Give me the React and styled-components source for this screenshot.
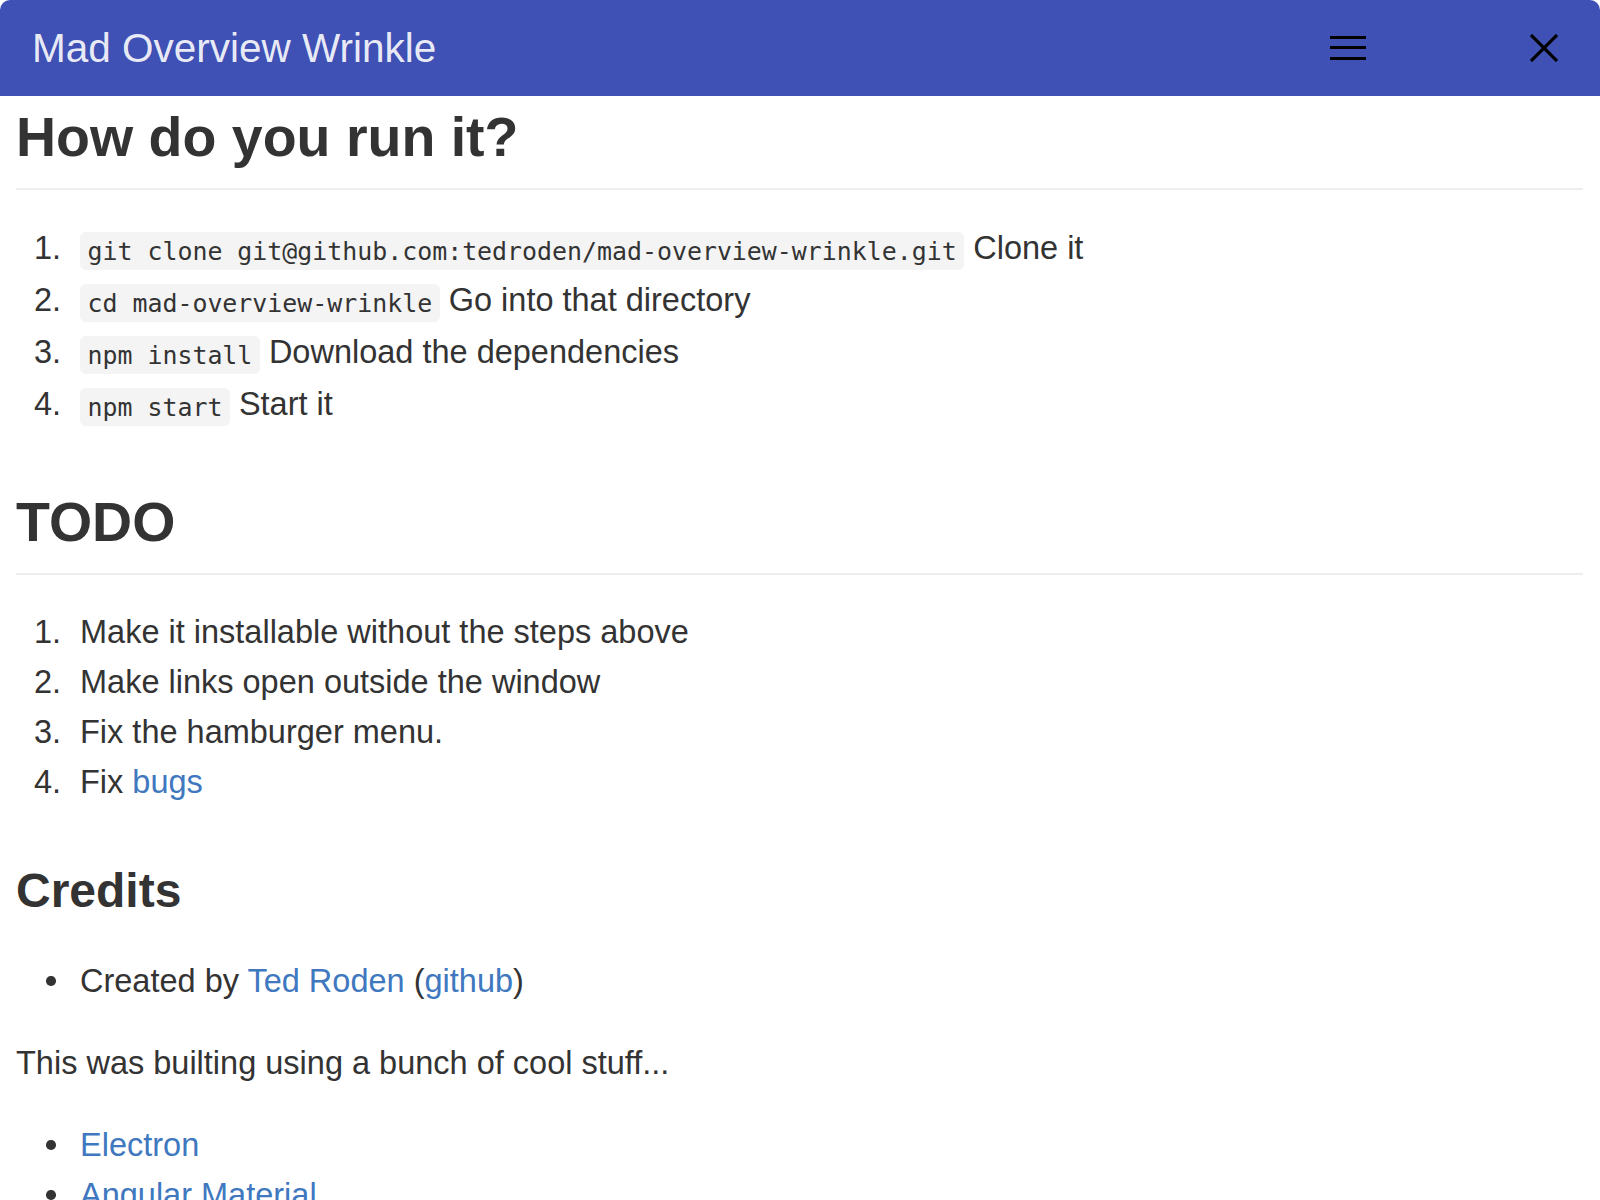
import React from 'react'
import styled, { createGlobalStyle } from 'styled-components'

const runSteps = [
  { code: 'git clone git@github.com:tedroden/mad-overview-wrinkle.git', text: 'Clone it' },
  { code: 'cd mad-overview-wrinkle', text: 'Go into that directory' },
  { code: 'npm install', text: 'Download the dependencies' },
  { code: 'npm start', text: 'Start it' },
]

function App() {
  return (
    <>
      <GlobalStyle />
      <Window>
        <Toolbar>
          <Title>Mad Overview Wrinkle</Title>
          <Controls>
            <IconButton aria-label="menu">
              <svg width="36" height="24" viewBox="0 0 36 24">
                <rect x="0" y="0" width="36" height="3" fill="#000" />
                <rect x="0" y="10" width="36" height="3" fill="#000" />
                <rect x="0" y="21" width="36" height="3" fill="#000" />
              </svg>
            </IconButton>
            <IconButton aria-label="close">
              <svg width="28" height="28" viewBox="0 0 28 28">
                <path d="M1 1 L27 27 M27 1 L1 27" stroke="#000" strokeWidth="3.2" />
              </svg>
            </IconButton>
          </Controls>
        </Toolbar>

        <Content>
          <Heading>How do you run it?</Heading>
          <List as="ol" $lh={52}>
            {runSteps.map((step, i) => (
              <Item key={step.code}>
                <Marker $lh={52}>{i + 1}.</Marker>
                <span>
                  <Code>{step.code}</Code> {step.text}
                </span>
              </Item>
            ))}
          </List>

          <Heading>TODO</Heading>
          <List as="ol">
            <Item>
              <Marker>1.</Marker>
              <span>Make it installable without the steps above</span>
            </Item>
            <Item>
              <Marker>2.</Marker>
              <span>Make links open outside the window</span>
            </Item>
            <Item>
              <Marker>3.</Marker>
              <span>Fix the hamburger menu.</span>
            </Item>
            <Item>
              <Marker>4.</Marker>
              <span>
                Fix <Link href="#">bugs</Link>
              </span>
            </Item>
          </List>

          <SubHeading>Credits</SubHeading>
          <List>
            <Item>
              <Marker><Dot /></Marker>
              <span>
                Created by <Link href="#">Ted Roden</Link> (<Link href="#">github</Link>)
              </span>
            </Item>
          </List>

          <Paragraph>This was builting using a bunch of cool stuff...</Paragraph>

          <List>
            <Item>
              <Marker><Dot /></Marker>
              <Link href="#">Electron</Link>
            </Item>
            <Item>
              <Marker><Dot /></Marker>
              <Link href="#">Angular Material</Link>
            </Item>
          </List>
        </Content>
      </Window>
    </>
  )
}

export default App

const GlobalStyle = createGlobalStyle`
  html, body {
    margin: 0;
    padding: 0;
    background: #fff;
  }
  body {
    font-family: "Liberation Sans", Helvetica, Arial, sans-serif;
    color: #333;
  }
`

const Window = styled.div`
  height: 100vh;
  display: flex;
  flex-direction: column;
  overflow: hidden;
  border-radius: 10px;
  background: #fff;
`

const Toolbar = styled.header`
  flex: none;
  height: 96px;
  display: flex;
  align-items: center;
  padding: 0 26px 0 32px;
  background: #3f51b5;
`

const Title = styled.div`
  font-size: 40.5px;
  color: rgba(255, 255, 255, 0.9);
`

const Controls = styled.div`
  margin-left: auto;
  display: flex;
  align-items: center;
  gap: 136px;
`

const IconButton = styled.button`
  width: 60px;
  height: 60px;
  padding: 0;
  border: none;
  background: transparent;
  display: flex;
  align-items: center;
  justify-content: center;
  cursor: pointer;
`

const Content = styled.main`
  flex: 1;
  padding: 0 17px 0 16px;
`

const Heading = styled.h1`
  margin: 62px 0 0;
  padding-bottom: 20px;
  border-bottom: 2px solid #eee;
  font-size: 55.5px;
  line-height: 1.1;
  font-weight: 700;
  color: #333;

  &:first-child {
    margin-top: 11px;
  }
`

const SubHeading = styled.h2`
  margin: 58px 0 38px;
  font-size: 48px;
  line-height: 1.1;
  font-weight: 700;
  color: #333;
`

const List = styled.ul`
  list-style: none;
  margin: 32px 0 0;
  padding: 0;
  font-size: 32.5px;
  line-height: ${(p) => p.$lh || 50}px;
`

const Item = styled.li`
  display: flex;
  align-items: flex-start;
  white-space: nowrap;
`

const Marker = styled.span`
  flex: none;
  width: 64px;
  height: ${(p) => p.$lh || 50}px;
  padding-left: 18px;
  box-sizing: border-box;
  display: flex;
  align-items: center;
`

const Dot = styled.span`
  width: 9.5px;
  height: 9.5px;
  margin-left: 12px;
  border-radius: 50%;
  background: #333;
`

const Code = styled.code`
  font-family: "DejaVu Sans Mono", Menlo, monospace;
  font-size: 24.9px;
  line-height: 1;
  padding: 4.5px 7.5px;
  border-radius: 6px;
  background: #f4f4f4;
  color: #333;
`

const Link = styled.a`
  color: #4078c0;
  text-decoration: none;
`

const Paragraph = styled.p`
  margin: 32px 0 0;
  font-size: 32.5px;
  line-height: 50px;
`
